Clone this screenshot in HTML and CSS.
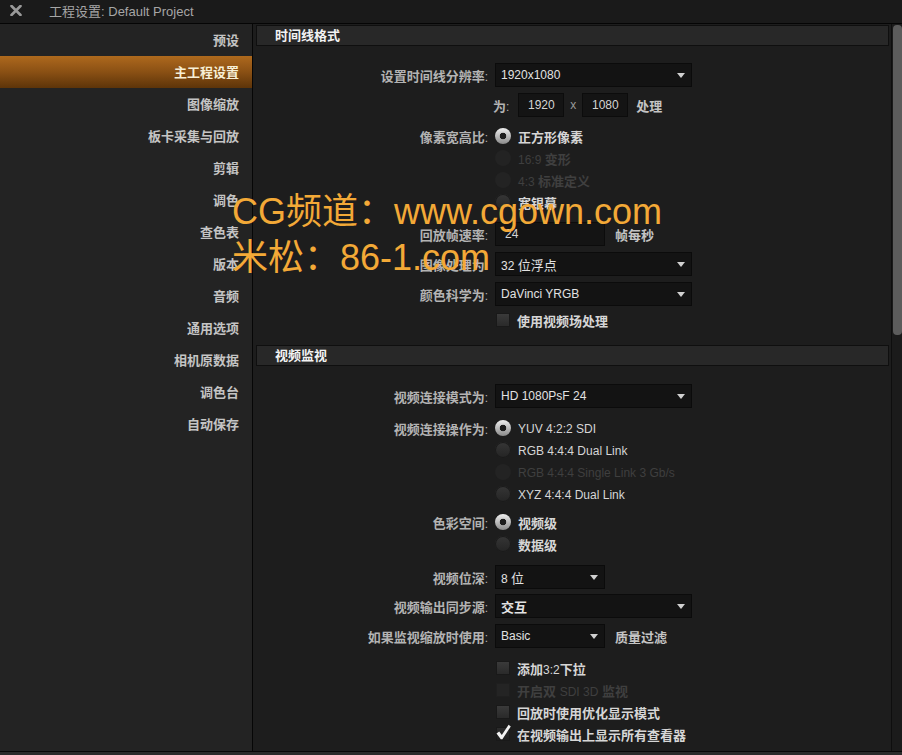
FILE: index.html
```html
<!DOCTYPE html>
<html lang="zh-CN">
<head>
<meta charset="utf-8">
<title>工程设置</title>
<link rel="stylesheet" href="styles.css">
</head>
<body>
<div class="app">
  <header class="titlebar">
    <span class="close">
      <svg width="12" height="11" viewBox="0 0 12 11"><path d="M1.5 1 L10.5 10 M10.5 1 L1.5 10" stroke="#9a9a9a" stroke-width="2.6" stroke-linecap="round"/></svg>
    </span>
    <span class="title">工程设置<span class="en">: Default Project</span></span>
  </header>
  <div class="main">
    <nav class="sidebar">
      <div class="nav-item">预设</div>
      <div class="nav-item active">主工程设置</div>
      <div class="nav-item">图像缩放</div>
      <div class="nav-item">板卡采集与回放</div>
      <div class="nav-item">剪辑</div>
      <div class="nav-item">调色</div>
      <div class="nav-item">查色表</div>
      <div class="nav-item">版本</div>
      <div class="nav-item">音频</div>
      <div class="nav-item">通用选项</div>
      <div class="nav-item">相机原数据</div>
      <div class="nav-item">调色台</div>
      <div class="nav-item">自动保存</div>
    </nav>
    <section class="content">
      <div class="section-head">时间线格式</div>
      <div class="section-body first">
        <div class="row">
          <span class="lbl">设置时间线分辨率<span class="en">:</span></span>
          <div class="select long"><span class="en">1920x1080</span><i class="caret"></i></div>
        </div>
        <div class="row g6">
          <span class="lbl"></span>
          <span class="for-lbl">为<span class="en">:</span></span>
          <div class="field num"><span class="en">1920</span></div>
          <span class="times en">x</span>
          <div class="field num"><span class="en">1080</span></div>
          <span class="after">处理</span>
        </div>
        <div class="row opt g8">
          <span class="lbl">像素宽高比<span class="en">:</span></span>
          <span class="radio on"></span><span class="opt-text">正方形像素</span>
        </div>
        <div class="row opt disabled">
          <span class="lbl"></span>
          <span class="radio"></span><span class="opt-text"><span class="en">16:9 </span>变形</span>
        </div>
        <div class="row opt disabled">
          <span class="lbl"></span>
          <span class="radio"></span><span class="opt-text"><span class="en">4:3 </span>标准定义</span>
        </div>
        <div class="row opt">
          <span class="lbl"></span>
          <span class="radio"></span><span class="opt-text">宽银幕</span>
        </div>
        <div class="row g9">
          <span class="lbl">回放帧速率<span class="en">:</span></span>
          <div class="field rate"><span class="en">24</span></div>
          <span class="after wide">帧每秒</span>
        </div>
        <div class="row g6">
          <span class="lbl">图像处理为<span class="en">:</span></span>
          <div class="select long"><span class="plain"><span class="en">32 </span>位浮点</span><i class="caret"></i></div>
        </div>
        <div class="row g6">
          <span class="lbl">颜色科学为<span class="en">:</span></span>
          <div class="select long"><span class="en">DaVinci YRGB</span><i class="caret"></i></div>
        </div>
        <div class="row opt g3">
          <span class="lbl"></span>
          <span class="check"></span><span class="opt-text">使用视频场处理</span>
        </div>
      </div>

      <div class="section-head second">视频监视</div>
      <div class="section-body next">
        <div class="row">
          <span class="lbl">视频连接模式为<span class="en">:</span></span>
          <div class="select long"><span class="en">HD 1080PsF 24</span><i class="caret"></i></div>
        </div>
        <div class="row opt g9">
          <span class="lbl">视频连接操作为<span class="en">:</span></span>
          <span class="radio on"></span><span class="opt-text"><span class="en">YUV 4:2:2 SDI</span></span>
        </div>
        <div class="row opt">
          <span class="lbl"></span>
          <span class="radio"></span><span class="opt-text"><span class="en">RGB 4:4:4 Dual Link</span></span>
        </div>
        <div class="row opt disabled">
          <span class="lbl"></span>
          <span class="radio"></span><span class="opt-text"><span class="en">RGB 4:4:4 Single Link 3 Gb/s</span></span>
        </div>
        <div class="row opt">
          <span class="lbl"></span>
          <span class="radio"></span><span class="opt-text"><span class="en">XYZ 4:4:4 Dual Link</span></span>
        </div>
        <div class="row opt g6">
          <span class="lbl">色彩空间<span class="en">:</span></span>
          <span class="radio on"></span><span class="opt-text">视频级</span>
        </div>
        <div class="row opt">
          <span class="lbl"></span>
          <span class="radio"></span><span class="opt-text">数据级</span>
        </div>
        <div class="row g10">
          <span class="lbl">视频位深<span class="en">:</span></span>
          <div class="select short"><span class="plain"><span class="en">8 </span>位</span><i class="caret"></i></div>
        </div>
        <div class="row g5">
          <span class="lbl">视频输出同步源<span class="en">:</span></span>
          <div class="select long"><span>交互</span><i class="caret"></i></div>
        </div>
        <div class="row g6">
          <span class="lbl">如果监视缩放时使用<span class="en">:</span></span>
          <div class="select short"><span class="en">Basic</span><i class="caret"></i></div>
          <span class="after wide">质量过滤</span>
        </div>
        <div class="row opt g9">
          <span class="lbl"></span>
          <span class="check"></span><span class="opt-text">添加<span class="en">3:2</span>下拉</span>
        </div>
        <div class="row opt disabled">
          <span class="lbl"></span>
          <span class="check"></span><span class="opt-text">开启双 <span class="en">SDI 3D</span> 监视</span>
        </div>
        <div class="row opt">
          <span class="lbl"></span>
          <span class="check"></span><span class="opt-text">回放时使用优化显示模式</span>
        </div>
        <div class="row opt">
          <span class="lbl"></span>
          <span class="check checked">
            <svg width="17" height="17" viewBox="0 0 17 17"><path d="M1.5 9.5 L4.2 7.6 L6.8 11 L13.6 0.8 L15.8 2.4 L7.4 15.2 L5.8 15.2 Z" fill="#f2f2f2"/></svg>
          </span><span class="opt-text">在视频输出上显示所有查看器</span>
        </div>
      </div>
    </section>
    <div class="scrollbar"><div class="thumb"></div></div>
  </div>
  <footer class="bottombar"></footer>
  <div class="watermark">
    <div class="wm-line">CG频道：www.cgown.com</div>
    <div class="wm-line">米松：86-1.com</div>
  </div>
</div>
</body>
</html>
```
FILE: styles.css
```css
* { box-sizing: border-box; margin: 0; padding: 0; }
html, body { width: 902px; height: 755px; overflow: hidden; background: #1d1d1d; }
body {
  font-family: "Liberation Sans", "Noto Sans CJK SC", sans-serif;
  font-size: 13px;
  color: #c8c8c8;
}
.en { font-family: "Liberation Sans", sans-serif; font-size: 12px; font-weight: normal; }

.app { position: relative; width: 902px; height: 755px; display: flex; flex-direction: column; }

/* title bar */
.titlebar {
  flex: none; height: 24px; background: #1a1a1a; border-bottom: 1px solid #050505;
  display: flex; align-items: center; padding-bottom: 3px;
}
.close { display: flex; padding-left: 10px; }
.title { margin-left: 27px; color: #a6a6a6; font-size: 13px; }
.title .en { font-size: 13px; }

/* main area */
.main { flex: 1; display: flex; min-height: 0; }
.sidebar {
  flex: none; width: 253px; background: #232323; border-right: 1px solid #060606;
}
.nav-item {
  height: 32px; line-height: 32px; text-align: right; padding-right: 13px; padding-top: 1px;
  font-weight: bold; color: #c4c4c4;
}
.nav-item.active {
  background: linear-gradient(#ae691d, #8a5014 50%, #5d3409);
  color: #f7efd6;
}

.content { flex: 1; min-width: 0; background: #1d1d1d; padding: 1px 2px 0 3px; overflow: hidden; }
.section-head {
  height: 21px; line-height: 19px; background: #282828; border: 1px solid #0f0f0f;
  padding-left: 18px; font-weight: bold; color: #f2f2f2;
}
.section-head.second { margin-top: 14px; }
.section-body.first { padding-top: 17px; }
.section-body.next { padding-top: 18px; }

.row { display: flex; align-items: center; height: 24px; }
.row.opt { height: 22px; }
.g3 { margin-top: 3px; } .g5 { margin-top: 5px; } .g6 { margin-top: 6px; }
.g8 { margin-top: 8px; } .g9 { margin-top: 9px; } .g10 { margin-top: 10px; }

.lbl {
  flex: none; width: 232px; margin-right: 7px; text-align: right;
  font-weight: bold; color: #b3b3b3; white-space: nowrap;
}
.lbl .en { font-weight: normal; }

.select {
  height: 24px; background: #131313; border: 1px solid #0b0b0b;
  display: flex; align-items: center; justify-content: space-between;
  padding: 0 5px 0 5px; color: #e2e2e2; font-weight: bold;
}
.select .plain { font-weight: normal; }
.select.long { width: 197px; }
.select.short { width: 110px; }
.caret {
  width: 0; height: 0; border-left: 4px solid transparent; border-right: 4px solid transparent;
  border-top: 5px solid #d0d0d0; margin-right: 1px;
}

.field {
  height: 24px; background: #141414; border: 1px solid #0c0c0c;
  display: flex; align-items: center; color: #d4d4d4;
}
.field.num { width: 46px; justify-content: center; }
.field.rate { width: 110px; padding-left: 9px; }
.for-lbl { font-weight: bold; color: #b3b3b3; margin-left: -2px; margin-right: 9px; }
.times { color: #9a9a9a; margin: 0 6px; }
.after { font-weight: bold; color: #c4c4c4; margin-left: 8px; }
.after.wide { margin-left: 10px; }

/* radios & checkboxes */
.radio {
  flex: none; width: 16px; height: 16px; border-radius: 50%; margin-right: 7px;
  background: linear-gradient(#363636, #242424);
  box-shadow: inset 0 0 0 1px #1b1b1b;
}
.radio.on {
  background:
    radial-gradient(circle, #1d1d1d 0 3px, rgba(0,0,0,0) 3.6px),
    linear-gradient(#efefef, #8a8a8a);
  box-shadow: none;
}
.check {
  position: relative; flex: none; width: 14px; height: 14px; margin-left: 1px; margin-right: 7px;
  background: linear-gradient(#3a3a3a, #2a2a2a); border: 1px solid #191919;
}
.check svg { position: absolute; left: -2px; top: -4px; }
.check.checked { background: linear-gradient(#2c2c2c, #1e1e1e); }
.opt-text { font-weight: bold; color: #d6d6d6; white-space: nowrap; }
.opt-text .en { color: #d6d6d6; }

.disabled .radio { background: #232323; box-shadow: none; }
.disabled .check { background: #242424; border-color: #1f1f1f; }
.disabled .opt-text, .disabled .opt-text .en { color: #3f3f3f; }

/* scrollbar */
.scrollbar {
  flex: none; width: 11px; background: #1b1b1b; border-left: 1px solid #0e0e0e;
  padding: 1px 1px 0 0;
}
.thumb { width: 9px; height: 310px; border-radius: 4px; background: #5c5c5c; margin-left: 1px; }

.bottombar { flex: none; height: 4px; background: #2b2b2b; border-top: 1px solid #080808; }

/* watermark overlay */
.watermark {
  position: absolute; left: 232px; top: 189px;
  color: #f3a937; font-size: 36px; font-family: "Liberation Sans", "Noto Sans CJK SC", sans-serif;
  pointer-events: none;
}
.wm-line { height: 46px; line-height: 46px; white-space: nowrap; }
```
